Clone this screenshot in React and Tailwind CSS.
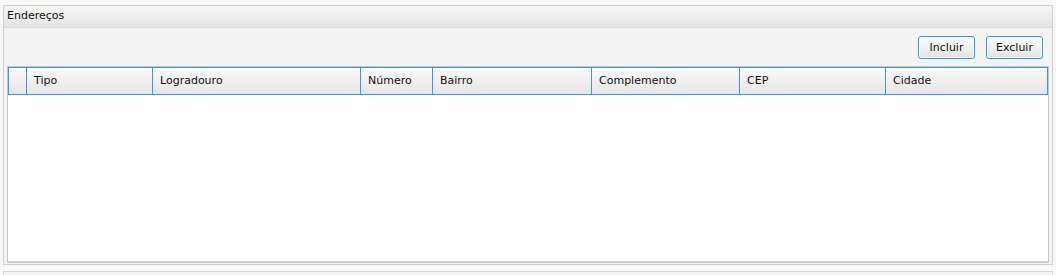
const columns = [
  { label: "", w: "w-[18px]" },
  { label: "Tipo", w: "w-[126px]" },
  { label: "Logradouro", w: "w-[208px]" },
  { label: "Número", w: "w-[72px]" },
  { label: "Bairro", w: "w-[159px]" },
  { label: "Complemento", w: "w-[148px]" },
  { label: "CEP", w: "w-[146px]" },
  { label: "Cidade", w: "flex-1" },
];

function ToolButton({ children }) {
  return (
    <button className="w-[57px] h-[23px] rounded-[3px] border border-[#3f98d4] bg-gradient-to-b from-[#ffffff] to-[#e2e2e2] shadow-[inset_0_0_0_1px_#ffffff] text-[11px] text-[#111] leading-none">
      {children}
    </button>
  );
}

export default function App() {
  return (
    <div
      className="w-[1056px] h-[275px] bg-[#f8f8f8] overflow-hidden pt-[5px] px-[3px] text-[11px] text-[#111]"
      style={{ fontFamily: '"DejaVu Sans", Tahoma, sans-serif' }}
    >
      <div className="h-[260px] border border-[#d0d0d0] flex flex-col">
        {/* titulo */}
        <div className="h-[22px] bg-gradient-to-b from-[#f6f6f6] to-[#e4e4e4] border-b border-[#dadada] flex items-center px-[3px]">
          Endereços
        </div>

        <div className="flex-1 bg-[#f4f4f4] flex flex-col px-[3px] pb-[1px]">
          <div className="h-[38px] flex items-center justify-end gap-[11px] pr-[6px] pt-[1px]">
            <ToolButton>Incluir</ToolButton>
            <ToolButton>Excluir</ToolButton>
          </div>

          <div className="flex-1 bg-white border border-[#c6c6c6] border-b-[2px] border-b-[#cdcdcd]">
            <div className="h-[28px] flex border border-[#3d97d5] bg-gradient-to-b from-[#fbfbfb] to-[#e5e5e5]">
              {columns.map((col, i) => (
                <div
                  key={i}
                  className={`${col.w} h-full flex items-center pl-[7px] pt-[1px] ${
                    i < columns.length - 1 ? "border-r border-[#3d97d5]" : ""
                  } shrink-0`}
                >
                  {col.label}
                </div>
              ))}
            </div>
          </div>
        </div>
      </div>
      <div className="mt-[6px] h-[10px] border border-[#d6d6d6] bg-gradient-to-b from-[#f6f6f6] to-[#ececec]"></div>
    </div>
  );
}
